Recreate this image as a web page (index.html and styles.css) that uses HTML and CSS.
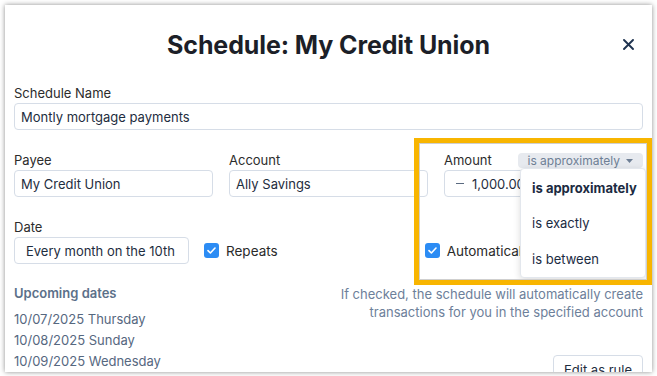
FILE: index.html
```html
<!DOCTYPE html>
<html>
<head>
<meta charset="utf-8">
<link rel="stylesheet" href="styles.css">
</head>
<body>
<div class="modal">
  <header class="head">
    <span class="head-spacer"></span>
    <h1 class="title">Schedule: My Credit Union</h1>
    <button class="close" aria-label="Close">
      <svg width="11" height="11" viewBox="0 0 11 11"><path d="M1 1L10 10M10 1L1 10" stroke="#1f3350" stroke-width="1.9" stroke-linecap="round"/></svg>
    </button>
  </header>

  <div class="field">
    <div class="label">Schedule Name</div>
    <div class="input">Montly mortgage payments</div>
  </div>

  <div class="row3">
    <div class="field">
      <div class="label">Payee</div>
      <div class="input">My Credit Union</div>
    </div>
    <div class="field">
      <div class="label">Account</div>
      <div class="input">Ally Savings</div>
    </div>
    <div class="field">
      <div class="label-row">
        <span class="label">Amount</span>
        <div class="op-wrap">
          <span class="pill">is approximately<svg class="caret" width="7" height="4" viewBox="0 0 7 4"><path d="M0 0H7L3.5 4Z" fill="#6e7f95"/></svg></span>
          <div class="menu">
            <div class="menu-item active">is approximately</div>
            <div class="menu-item">is exactly</div>
            <div class="menu-item">is between</div>
          </div>
        </div>
      </div>
      <div class="input amount"><span class="minus"></span>1,000.00</div>
    </div>
  </div>

  <div class="daterow">
    <div class="field date-field">
      <div class="label">Date</div>
      <div class="input date">Every month on the 10th</div>
    </div>
    <div class="check repeats">
      <span class="box"><svg width="9" height="7" viewBox="0 0 9 7"><path d="M1 3.6L3.4 6L8 1" fill="none" stroke="#fff" stroke-width="1.6" stroke-linecap="round" stroke-linejoin="round"/></svg></span>
      <span>Repeats</span>
    </div>
    <div class="check auto">
      <span class="box"><svg width="9" height="7" viewBox="0 0 9 7"><path d="M1 3.6L3.4 6L8 1" fill="none" stroke="#fff" stroke-width="1.6" stroke-linecap="round" stroke-linejoin="round"/></svg></span>
      <span>Automatically add transaction</span>
    </div>
  </div>

  <div class="bottom">
    <div class="upcoming">
      <div class="up-title">Upcoming dates</div>
      <ul class="dates">
        <li>10/07/2025 Thursday</li>
        <li>10/08/2025 Sunday</li>
        <li>10/09/2025 Wednesday</li>
      </ul>
    </div>
    <div class="side">
      <p class="help">If checked, the schedule will automatically create<br>transactions for you in the specified account</p>
      <button class="btn">Edit as rule</button>
    </div>
  </div>
</div>
<div class="highlight"></div>
</body>
</html>
```

FILE: styles.css
```css
* { box-sizing: border-box; }
html, body { margin: 0; padding: 0; background: #ffffff; }
body {
  font-family: Inter, "Noto Sans", sans-serif;
  font-size: 13px;
  color: #2a2a2a;
  width: 657px;
  height: 376px;
  overflow: hidden;
  position: relative;
}
.modal {
  margin: 5px 0 0 5px;
  width: 647px;
  height: 367px;
  background: #fff;
  box-shadow: 0 0 5px rgba(0,0,0,0.45);
  padding: 0 9px;
  overflow: hidden;
  display: flex;
  flex-direction: column;
}
.head {
  display: grid;
  grid-template-columns: 1fr auto 1fr;
  align-items: center;
  padding-top: 25px;
  margin-bottom: 25px;
}
.title {
  margin: 0;
  font-size: 25px;
  line-height: 30px;
  font-weight: 700;
  color: #1c1f28;
  letter-spacing: -0.1px;
}
.close {
  justify-self: end;
  margin-right: 5px;
  width: 20px;
  height: 20px;
  border: 0;
  padding: 0;
  margin-top: -2px;
  background: transparent;
  display: flex;
  align-items: center;
  justify-content: center;
}
.field { display: flex; flex-direction: column; }
.label {
  line-height: 16px;
  margin-bottom: 2px;
  color: #2c2c2c;
}
.label-row {
  display: flex;
  justify-content: space-between;
  align-items: center;
  height: 16px;
  margin-bottom: 2px;
}
.label-row .label { margin-bottom: 0; }
.input {
  height: 27px;
  border: 1px solid #d6dde7;
  border-radius: 4px;
  padding: 0 6px;
  display: flex;
  align-items: center;
  color: #1e2d40;
  white-space: nowrap;
  overflow: hidden;
}
.row3 {
  display: grid;
  grid-template-columns: repeat(3, 1fr);
  column-gap: 16px;
  margin-top: 22px;
}
.op-wrap { position: relative; }
.pill {
  display: flex;
  align-items: center;
  gap: 6px;
  height: 15px;
  padding: 0 10px 0 9px;
  border-radius: 4px;
  background: #e7eaef;
  color: #6e7f95;
  font-size: 12px;
}
.caret { margin-top: 1px; }
.menu {
  position: absolute;
  top: 100%;
  right: -3px;
  width: 126px;
  background: #fff;
  border: 1px solid #e3e7ed;
  border-radius: 4px;
  box-shadow: 0 2px 7px rgba(0,0,0,0.14);
  padding-top: 2px;
  z-index: 5;
}
.menu-item {
  height: 35.5px;
  line-height: 35.5px;
  padding-left: 11px;
  color: #1b2b42;
  font-size: 13px;
}
.menu-item.active { font-weight: 700; }
.amount { padding-left: 11px; }
.minus {
  display: inline-block;
  width: 8px;
  height: 1.5px;
  background: #5a6a80;
  margin-right: 8px;
}
.daterow {
  display: flex;
  align-items: flex-end;
  margin-top: 22px;
}
.date-field { width: 175px; }
.input.date { padding-left: 11px; }
.check {
  height: 27px;
  display: flex;
  align-items: center;
  gap: 7px;
  color: #2a2a2a;
  font-size: 13.5px;
}
.repeats { margin-left: 15px; }
.auto { margin-left: auto; margin-right: 7px; white-space: nowrap; }
.box {
  width: 15px;
  height: 15px;
  border-radius: 3px;
  background: #2c8cf4;
  display: flex;
  align-items: center;
  justify-content: center;
}
.bottom {
  display: flex;
  justify-content: space-between;
  margin-top: 21px;
}
.up-title {
  line-height: 16px;
  font-weight: 600;
  color: #5b7089;
  margin-bottom: 8px;
}
.dates {
  list-style: none;
  margin: 0;
  padding: 0;
  color: #56687f;
}
.dates li { line-height: 21px; }
.side {
  display: flex;
  flex-direction: column;
  align-items: flex-end;
}
.help {
  margin: 0;
  text-align: right;
  line-height: 18px;
  color: #6d809a;
}
.btn {
  margin-top: 34px;
  height: 30px;
  padding: 0 10px;
  border: 1px solid #d6dde7;
  border-radius: 4px;
  background: #fff;
  font-family: inherit;
  font-size: 13px;
  color: #1e2d40;
}
.highlight {
  position: absolute;
  left: 414px;
  top: 138px;
  width: 238px;
  height: 147px;
  border: 5px solid #f8b500;
  box-shadow: inset 0 0 0 1px #cfcfcf;
  pointer-events: none;
  z-index: 10;
}
```
